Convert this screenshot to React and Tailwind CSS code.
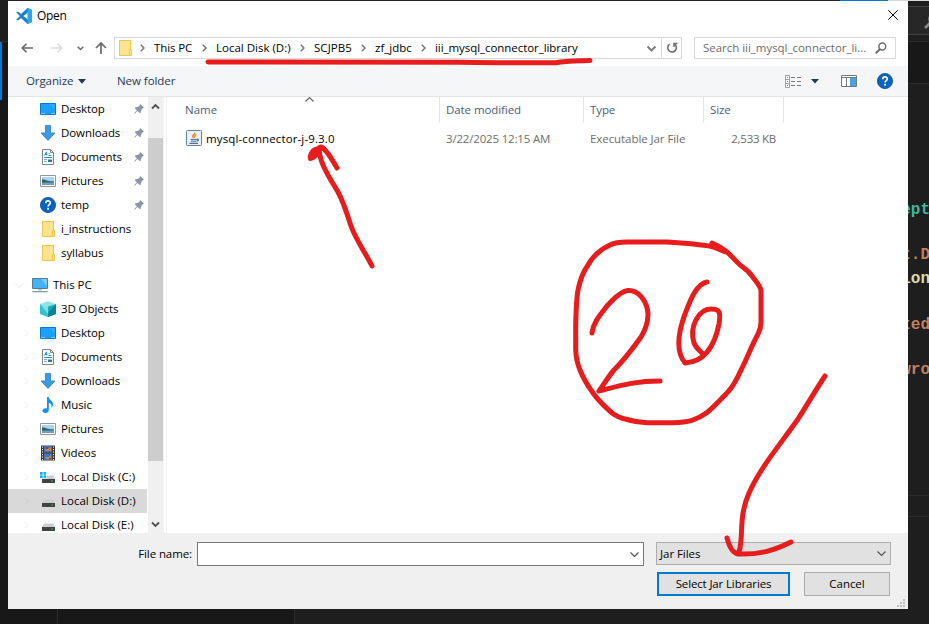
import React from "react";

const Help = ({ className }) => (
  <svg viewBox="0 0 16 16" className={className}>
    <circle cx="8" cy="8" r="7.6" fill="#0a63c0" stroke="#0a4c94" strokeWidth=".8" />
    <path d="M5.7 6.2C5.7 3 10.4 3.2 10.3 5.9C10.2 7.6 8.1 7.6 8.1 9.6" fill="none" stroke="#fff" strokeWidth="1.6" />
    <rect x="7.2" y="10.8" width="1.8" height="1.8" fill="#fff" />
  </svg>
);

const Folder = () => (
  <svg viewBox="0 0 16 16" className="h-4 w-4 shrink-0">
    <path d="M2.5.5h11v15h-11z" fill="#ffe391" stroke="#efc748" />
    <path d="M12.5 9.5h2v6h-2z" fill="#ffe391" stroke="#efc748" />
  </svg>
);

const icons = {
  desktop: (
    <svg viewBox="0 0 16 16" className="h-4 w-4 shrink-0">
      <path d="M.5 2.5h15v11H.5z" fill="#18a0fb" stroke="#0b75c9" />
      <path d="M9 3h6v6z" fill="#3fb3ff" opacity=".5" />
      <path d="M1.5 12.5h1M3.5 12.5h1M11.5 12.5h1M13.5 12.5h1" stroke="#d8efff" />
    </svg>
  ),
  downloads: (
    <svg viewBox="0 0 16 16" className="h-4 w-4 shrink-0">
      <path d="M5.5.5h5V8H15L8 15.4 1 8h4.5z" fill="#3e9ae6" stroke="#2b7dc6" strokeWidth=".8" />
    </svg>
  ),
  documents: (
    <svg viewBox="0 0 16 16" className="h-4 w-4 shrink-0">
      <path d="M2.5.5h8l3 3v12h-11z" fill="#fff" stroke="#858585" />
      <path d="M10.5.5v3h3" fill="none" stroke="#858585" />
      <path d="M4.3 6.5L6.5 2.8L7 6.5M5 5.5h2M8.5 4.5h1M8.5 6.5h3M4 8.5h8" fill="none" stroke="#2691d9" />
      <path d="M4 10.5h3M4 12.5h3" stroke="#85abc7" />
      <path d="M8 10h4v3H8z" fill="#35708f" />
      <path d="M8 10h4v1H8z" fill="#8cc3ea" />
    </svg>
  ),
  pictures: (
    <svg viewBox="0 0 16 16" className="h-4 w-4 shrink-0">
      <path d="M.5 2.5h15v11H.5z" fill="#fff" stroke="#979797" />
      <path d="M2 4h12v8H2z" fill="#a9d4f7" />
      <path d="M2 6.5c4-.5 5 2.3 12 1.8V10H2z" fill="#2f6660" />
      <path d="M2 10c4-1 8 0 12-1v3H2z" fill="#6f9fc5" />
    </svg>
  ),
  temp: <Help className="h-4 w-4 shrink-0" />,
  folder: <Folder />,
  pc: (
    <svg viewBox="0 0 16 16" className="h-4 w-4 shrink-0">
      <path d="M.5 1.5h15v10H.5z" fill="#45b1f8" stroke="#4d7c9f" />
      <path d="M9 2h6v7z" fill="#7fcbfb" />
      <path d="M6 12h4v1.5H6z" fill="#b9c5cd" />
      <path d="M0 14.5h16" stroke="#8aa0b1" />
      <path d="M1 15.5h14" stroke="#d3dde5" />
    </svg>
  ),
  objects: (
    <svg viewBox="0 0 16 16" className="h-4 w-4 shrink-0">
      <path d="M0 3l8-2.8L16 3 8 5.5z" fill="#8fe3ea" />
      <path d="M0 3l8 2.5V16l-8-3z" fill="#7fdfe6" />
      <path d="M0 3l8 10v3l-8-3z" fill="#35c3d0" />
      <path d="M16 3L8 5.5V16l8-3z" fill="#18aabd" />
      <path d="M16 3v10l-8 3V12z" fill="#0a8397" />
    </svg>
  ),
  music: (
    <svg viewBox="0 0 16 16" className="h-4 w-4 shrink-0">
      <path d="M7 0h1.7c.3 3 4.6 4 4.3 7.5-.1 1.4-.8 2.6-1.7 3.5.8-3-.6-4.6-2.5-5.3V13c0 3.8-6.3 4-6.3.7C2.5 11.500 5 10.700 7 11.400z" fill="#0f92ec" />
    </svg>
  ),
  videos: (
    <svg viewBox="0 0 16 16" className="h-4 w-4 shrink-0">
      <path d="M1 .5h14v15H1z" fill="#3b3b3b" />
      <path d="M4 1h8v6.5H4zM4 8.5h8V15H4z" fill="#3e76c6" />
      <path d="M5 4h3l3-2v4H6zM5 12h4l2-2v4H6z" fill="#c98934" />
      <path d="M6 2h2v2H6zM9 13h2v1H9z" fill="#a93531" />
      <path d="M2.5 1.5v14M13.5 1.5v14" stroke="#eee" strokeDasharray="1.2 1.3" />
    </svg>
  ),
  windisk: (
    <svg viewBox="0 0 16 16" className="h-4 w-4 shrink-0">
      <path d="M7 6.500h6L15 10v1H2V9.500h5z" fill="#cdced2" />
      <path d="M2 10h13v4H2z" fill="#404244" />
      <path d="M11.5 11.5h1.300v1h-1.300z" fill="#4be360" />
      <path d="M0 3h2.700v2.700H0zM3.500 3h2.700v2.700H3.500zM0 6.300h2.700V9H0zM3.500 6.300h2.700V9H3.500z" fill="#12b2ec" />
    </svg>
  ),
  disk: (
    <svg viewBox="0 0 16 16" className="h-4 w-4 shrink-0">
      <path d="M4 6.500h9l2 3.500H2z" fill="#cdced2" />
      <path d="M2 10h13v4H2z" fill="#404244" />
      <path d="M11.5 11.5h1.300v1h-1.300z" fill="#4be360" />
    </svg>
  ),
};

const quick = [
  ["Desktop", "desktop", true],
  ["Downloads", "downloads", true],
  ["Documents", "documents", true],
  ["Pictures", "pictures", true],
  ["temp", "temp", true],
  ["i_instructions", "folder", false],
  ["syllabus", "folder", false],
];

const places = [
  ["3D Objects", "objects", "tracking-[-0.1px]"],
  ["Desktop", "desktop", "tracking-[-0.1px]"],
  ["Documents", "documents", "tracking-[-0.05px]"],
  ["Downloads", "downloads", "tracking-[-0.1px]"],
  ["Music", "music", "tracking-[-0.1px]"],
  ["Pictures", "pictures", "tracking-[-0.1px]"],
  ["Videos", "videos", "tracking-[-0.1px]"],
  ["Local Disk (C:)", "windisk", "tracking-[0.05px]"],
  ["Local Disk (D:)", "disk", "tracking-[0px]"],
  ["Local Disk (E:)", "disk", "tracking-[0px]"],
];

const crumbs = [
  ["This PC", "w-[62px]", "tracking-[-0.1px]"],
  ["Local Disk (D:)", "w-[98px]", "tracking-[0px]"],
  ["SCJPB5", "w-[61px]", "tracking-[0.05px]"],
  ["zf_jdbc", "w-[60px]", "tracking-[0px]"],
  ["iii_mysql_connector_library", "w-[160px]", "tracking-[-0.06px]"],
];

const Chevron = ({ className = "", d = "M1.5 1.5l4 4 4-4", sw = 1.5 }) => (
  <svg viewBox="0 0 11 7" className={"h-[7px] w-[11px] shrink-0 " + className}>
    <path d={d} fill="none" stroke="currentColor" strokeWidth={sw} />
  </svg>
);

const Right = ({ className }) => (
  <svg viewBox="0 0 5 8" className={"h-2 w-[5px] shrink-0 " + className}>
    <path d="M.8.8L4 4 .8 7.2" fill="none" stroke="currentColor" strokeWidth="1.5" />
  </svg>
);

const Pin = () => (
  <svg viewBox="0 0 10 10" className="h-2.5 w-2.5 shrink-0">
    <path d="M6.3 0L10 3.700 8.800 4.300 7 6.200 6.800 8.600 5.800 9.200 3.600 7 .6 9.700.2 9.300 2.900 6.300.8 4.200 1.400 3.200 3.800 3 5.700 1.200z" fill="#8b98a3" />
  </svg>
);

const Magnifier = ({ className }) => (
  <svg viewBox="0 0 12 12" className={className}>
    <circle cx="7.3" cy="4.5" r="3.4" fill="none" stroke="currentColor" strokeWidth="1.5" />
    <path d="M5 7L.8 11.2" stroke="currentColor" strokeWidth="2" />
  </svg>
);

function TitleBar() {
  return (
    <div className="flex h-[30px] items-center pl-2 pr-[10px]">
      <svg viewBox="0 0 16 16" className="h-4 w-4">
        <path d="M11.5 0L16 2v12l-4.500 2L5 10 2 12.500.3 11.500 4 8 .3 4.500 2 3.500 5 6zM12 4.500L7.300 8 12 11.500z" fill="#1683cc" fillRule="evenodd" />
        <path d="M11.5 0L16 2v12l-4.500 2z" fill="#2ba5ee" />
      </svg>
      <span className="ml-[5px] text-[12px] tracking-[-0.3px]">Open</span>
      <svg viewBox="0 0 10 10" className="mb-[2px] ml-auto h-[10px] w-[10px]">
        <path d="M.3.3l9.400 9.400M9.700.3L.3 9.700" stroke="#000" strokeWidth="1" />
      </svg>
    </div>
  );
}

function AddressRow() {
  return (
    <div className="flex h-[35px] items-start pt-[6px]">
      <div className="flex h-[22px] w-[106px] items-center text-[#6a6a6a]">
        <svg viewBox="0 0 12 10" className="ml-[13px] h-[10px] w-3">
          <path d="M12 5H1M5.5.7L1.2 5l4.3 4.3" fill="none" stroke="currentColor" strokeWidth="1.6" />
        </svg>
        <svg viewBox="0 0 12 10" className="ml-[18px] h-[10px] w-3 text-[#dcdcdc]">
          <path d="M0 5h11M6.5.7L10.8 5 6.5 9.3" fill="none" stroke="currentColor" strokeWidth="1.6" />
        </svg>
        <svg viewBox="0 0 7 5" className="ml-[14px] h-[5px] w-[7px]">
          <path d="M.7.7L3.5 3.5 6.3.7" fill="none" stroke="currentColor" strokeWidth="1.5" />
        </svg>
        <svg viewBox="0 0 12 12" className="ml-[11px] h-3 w-3">
          <path d="M6 12V1M1 6l5-5 5 5" fill="none" stroke="currentColor" strokeWidth="1.7" />
        </svg>
      </div>
      <div className="flex h-[22px] w-[568px] items-center border border-[#d9d9d9] pl-[2px]">
        <Folder />
        <Right className="ml-[7px] mr-[9px] text-[#777]" />
        {crumbs.map(([t, w, tr], i) => (
          <div key={t} className={"flex shrink-0 items-center justify-between whitespace-nowrap " + w + (i < 4 ? " pr-[9px]" : "")}>
            <span className={tr}>{t}</span>
            {i < 4 && <Right className="text-[#777]" />}
          </div>
        ))}
        <Chevron className="ml-auto text-[#777]" sw={1.8} />
        <div className="ml-1 flex h-full w-[20px] items-center justify-center border-l border-[#d9d9d9]">
          <svg viewBox="0 0 12 12" className="h-3 w-3">
            <path d="M8.6 2.2A4.3 4.3 0 1 1 3.7 2.1" fill="none" stroke="#6d6d6d" strokeWidth="1.6" />
            <path d="M8 5V1.500h3.500" fill="none" stroke="#6d6d6d" strokeWidth="1.5" />
          </svg>
        </div>
      </div>
      <div className="ml-[12px] flex h-[22px] w-[202px] items-center justify-between border border-[#d9d9d9] pl-2 pr-2 text-[#6d6d6d]">
        <span className="whitespace-nowrap tracking-[-0.03px]">Search iii_mysql_connector_li...</span>
        <Magnifier className="h-3 w-3 shrink-0" />
      </div>
    </div>
  );
}

function Toolbar() {
  return (
    <div className="flex h-[31px] items-center border-b border-[#e5e5e5] bg-[#f5f6f7] pl-[18px] text-[#1e395b]">
      <span className="w-[48px] whitespace-nowrap tracking-[-0.1px]">Organize</span>
      <svg viewBox="0 0 8 5" className="ml-[4px] h-[5px] w-2"><path d="M0 0h8L4 4.8z" fill="#1e395b" /></svg>
      <span className="ml-[31px] tracking-[-0.05px]">New folder</span>
      <div className="ml-auto flex items-center pr-[15px]">
        <svg viewBox="0 0 17 13" className="h-[13px] w-[17px]">
          <path d="M.5.5h4v12h-4zM.5 4.5h4M.5 8.5h4" fill="#fff" stroke="#a0a0a0" />
          <path d="M2 2h1v1H2z" fill="#777" /><path d="M2 6h1v1H2z" fill="#2c82cf" /><path d="M2 10h1v1H2z" fill="#d33" />
          <path d="M6 2.5h4M12 2.5h4M6 6.5h4M12 6.5h4M6 10.5h4M12 10.5h4" stroke="#777" />
        </svg>
        <svg viewBox="0 0 8 5" className="ml-[9px] h-[5px] w-2"><path d="M0 0h8L4 4.5z" fill="#1e395b" /></svg>
        <svg viewBox="0 0 16 12" className="ml-[22px] h-3 w-4">
          <path d="M.5.5h15v11H.5zM.5 2.5h15M5.5 2.5v9" fill="#fff" stroke="#777" />
          <path d="M9 3h6v8H9z" fill="#47a2e8" />
        </svg>
        <Help className="ml-5 h-4 w-4" />
      </div>
    </div>
  );
}

function Sidebar() {
  return (
    <div className="flex h-[436px] w-[159px] shrink-0 border-r border-[#f0f0f0]">
      <div className="w-[139px] shrink-0 overflow-hidden">
        {quick.map(([t, ic, pin]) => (
          <div key={t} className="flex h-6 items-center pl-8 pr-[3px]">
            {icons[ic]}
            <span className="ml-[5px] whitespace-nowrap tracking-[-0.08px]">{t}</span>
            {pin && <span className="ml-auto"><Pin /></span>}
          </div>
        ))}
        <div className="mt-2 flex h-6 items-center pl-[6px]">
          <Chevron className="mr-[7px] text-[#f0f0f0]" />
          {icons.pc}
          <span className="ml-[5px] tracking-[-0.05px]">This PC</span>
        </div>
        {places.map(([t, ic, tr]) => (
          <div key={t} className={"flex h-6 items-center pl-4 " + (t.includes("D:") ? "bg-[#d9d9d9]" : "")}>
            <Right className={"mr-[11px] " + (t.includes("D:") ? "text-[#d1d1d1]" : "text-[#f5f5f5]")} />
            {icons[ic]}
            <span className={"ml-[5px] whitespace-nowrap " + tr}>{t}</span>
          </div>
        ))}
      </div>
      <div className="ml-px flex w-4 flex-col items-start bg-[#f0f0f0] text-[#505050]">
        <Chevron className="ml-[2px] mt-[6px]" d="M2 5.5l3.5-3.5L9 5.5" sw={1.8} />
        <div className="mt-[28px] h-[323px] w-[15px] bg-[#cdcdcd]" />
        <Chevron className="mb-[5px] ml-[2px] mt-auto" sw={1.8} d="M2 1.5l3.5 3.5L9 1.5" />
      </div>
    </div>
  );
}

function FileList() {
  return (
    <div className="h-[436px] grow">
      <div className="flex h-[26px] items-center text-[#4c607a]">
        <div className="relative flex h-full w-[273px] items-center border-r border-[#e5e5e5] pl-[18px]">
          <span>Name</span>
          <Chevron className="absolute left-[137px] top-[-1px] text-[#666]" d="M1.5 5.5l4-4 4 4" sw={1.2} />
        </div>
        <div className="flex h-full w-[144px] items-center border-r border-[#e5e5e5] pl-[6px] tracking-[-0.08px]">Date modified</div>
        <div className="flex h-full w-[120px] items-center border-r border-[#e5e5e5] pl-[6px] tracking-[-0.1px]">Type</div>
        <div className="flex h-full w-[80px] items-center border-r border-[#e5e5e5] pl-[6px] tracking-[-0.1px]">Size</div>
      </div>
      <div className="mt-[5px] flex h-[22px] items-center text-[#6d6d6d]">
        <div className="flex w-[273px] items-center pl-[19px] text-black">
          <svg viewBox="0 0 16 16" className="mb-[2px] h-4 w-4">
            <rect x=".5" y=".5" width="15" height="15" rx="1" fill="#e9eff5" stroke="#64849d" />
            <path d="M8.8 2.5C9.5 4.3 4.8 5 7.5 8M10.5 4.5c-2.6 1-2 1.8-1.8 3.3" fill="none" stroke="#e97817" strokeWidth="1.2" />
            <path d="M4.5 9.5h6M5 11.3h5M3.5 13.4h8.5M10.5 9.2c3-.6 2.2 1.7 0 2.1" fill="none" stroke="#466f91" strokeWidth="1.1" />
          </svg>
          <span className="ml-1 whitespace-nowrap tracking-[0.12px]">mysql-connector-j-9.3.0</span>
        </div>
        <div className="w-[144px] whitespace-nowrap pl-[6px] tracking-[-0.18px]">3/22/2025 12:15 AM</div>
        <div className="w-[120px] whitespace-nowrap pl-[6px] tracking-[-0.07px]">Executable Jar File</div>
        <div className="w-[72px] whitespace-nowrap text-right tracking-[-0.25px]">2,533 KB</div>
      </div>
    </div>
  );
}

function Footer() {
  return (
    <div className="flex h-[76px] shrink-0 flex-col bg-[#f0f0f0]">
      <div className="flex h-[33px] items-end">
        <span className="flex h-[25px] w-[184px] items-center justify-end tracking-[-0.1px]">File name:</span>
        <div className="ml-[5px] flex h-[24px] w-[447px] items-center justify-end border border-[#7a7a7a] bg-white pr-[3px] text-[#555]">
          <Chevron sw={1.2} />
        </div>
        <div className="mb-px ml-3 flex h-[23px] w-[235px] items-center justify-between border border-[#adadad] bg-[#e1e1e1] pl-[3px] pr-[3px]">
          <span className="tracking-[-0.05px]">Jar Files</span>
          <Chevron sw={1.2} className="text-[#555]" />
        </div>
      </div>
      <div className="mt-[6px] flex pl-[649px]">
        <div className="flex h-6 w-[133px] items-center justify-center border-2 border-[#0078d7] bg-[#e1e1e1] tracking-[-0.14px]">Select Jar Libraries</div>
        <div className="ml-[14px] flex h-6 w-[86px] items-center justify-center border border-[#adadad] bg-[#e1e1e1] tracking-[-0.05px]">Cancel</div>
      </div>
      <svg viewBox="0 0 8 8" className="ml-auto mr-[3px] mt-[3px] h-2 w-2 shrink-0">
        <path d="M6 0h2v2H6zM3 3h2v2H3zM6 3h2v2H6zM0 6h2v2H0zM3 6h2v2H3zM6 6h2v2H6z" fill="#bfbfbf" />
      </svg>
    </div>
  );
}

function Annotations() {
  return (
    <svg viewBox="0 0 929 624" className="pointer-events-none absolute left-0 top-0 h-[624px] w-[929px]" fill="none" stroke="#e81c1c" strokeWidth="5" strokeLinecap="round" strokeLinejoin="round">
      <path d="M208 62C300 61.5 380 61.5 460 62.3C500 62.8 540 63 556 62.7C565 61 575 61 590 60.5" />
      <path d="M372 266C365 252 356 240 351 226C347 214 344 203 338 192C332 181 323 170 320 156L319 149M319 149C319 147 321 146.5 323 148C329 153 332 160 337 168" />
      <path d="M310.5 158.5C309.5 155 313 149.5 317 149C321 149 317 156 310.5 158.5Z" fill="#e81c1c" />
      <path d="M712 243C717 245 722 248 727 252C732 256 736 262 742 266.5C747 270 750 273 752 276C757 283 761 287 761 291V322C761 326 760 330 758 334C752 345 748 356 742 368C738 377 733 387 727 393C720 400 714 407 707 412.5C697 420 688 422.5 673 422.7H647C640 422.5 632 421 627 419.5C620 418 616 416 612 413C604 406 598 400 593 393C588 386 583 378 580 370C577 363 576 357 575.7 350V327C576 312 576 301 578 290C580 280 583 272 588 265C593 256 601 249 610 245C615 242.500 620 242 627 242H667C683 243 698 244 712 246.500C717 248 721 250 725 251.700" />
      <path d="M592 333C593 323 600 315 607 306C615 297 622 291 628 290.5C638 290 647 300 648 314C648 323 646 329 641 337C631 351 620 364 614 370C608 377 602 387 599 391C619 386 634 381 660 381" />
      <path d="M707 282C696 284 690 301 685 314C678 333 676 352 685 363C702 362 714 349 719 324C721 311 719 309 711 309C699 309 689 326 694 343C696 348 700 351 703 354" />
      <path d="M825 376C815 391 807 405 798 419C779 446 760 468 749 493C738 518 744 536 739 552M727 538C729 546 733 553 738 554C760 555 775 550 791 542" />
    </svg>
  );
}

function EditorEdge() {
  return (
    <div className="relative w-[21px] shrink-0 overflow-hidden bg-[#1e1e1e] font-['Liberation_Mono','DejaVu_Sans_Mono',monospace] text-[16px] font-bold leading-6">
      <div className="h-px bg-[#d8d8d8]" />
      <div className="mt-[5px] flex h-[29px] items-center border-y border-[#414141] bg-[#272727] pl-4">
        <Magnifier className="h-4 w-4 shrink-0 text-[#888]" />
      </div>
      <div className="mt-[6px] h-[43px] border-y border-[#2c2c2c] bg-[#181818]" />
      <div className="mt-[114px] flex h-6 justify-end whitespace-nowrap text-[#3cb99c]"><span className="mr-[-1px]">ept</span></div>
      <div className="mt-[21px] flex h-6 justify-end text-[#c47f60]"><span className="mr-[-1px]">t.D</span></div>
      <div className="flex h-6 justify-end text-[#dcdcaa]"><span className="mr-[-1px]">ion</span></div>
      <div className="mt-[22px] flex h-6 justify-end text-[#c47f60]"><span className="mr-[-1px]">ted</span></div>
      <div className="mt-[21px] flex h-6 justify-end text-[#c47f60]"><span className="mr-[-1px]">wro</span></div>
      <div className="mt-[113px] h-[22px] border-y border-[#2c2c2c]" />
    </div>
  );
}

export default function App() {
  return (
    <div className="relative flex h-[624px] w-[929px] overflow-hidden bg-[#1a1a1a] font-['Open_Sans','Noto_Sans',sans-serif] text-[11.5px] leading-4 text-black">
      <div className="w-2 shrink-0 bg-[#181818]">
        <div className="h-[42px] border-b border-[#2b2b2b] bg-[#1e1e1e]" />
        <div className="h-[58px] w-[2px] bg-[#0078d4]" />
      </div>
      <div className="w-[900px] shrink-0">
        <div className="flex h-px bg-[#222] pl-[832px]">
          <div className="w-12 bg-[#0078d7]" />
          <div className="grow bg-[#d8d8d8]" />
        </div>
        <div className="flex h-[608px] flex-col bg-white">
          <TitleBar />
          <AddressRow />
          <Toolbar />
          <div className="flex h-[436px]">
            <Sidebar />
            <FileList />
          </div>
          <Footer />
        </div>
        <div className="flex h-[15px] bg-[#181818]">
          <div className="w-[50px] border-r border-[#2b2b2b]" />
          <div className="w-[237px] border-r border-[#2b2b2b]" />
          <div className="grow bg-[#1e1e1e]" />
        </div>
      </div>
      <EditorEdge />
      <Annotations />
    </div>
  );
}
